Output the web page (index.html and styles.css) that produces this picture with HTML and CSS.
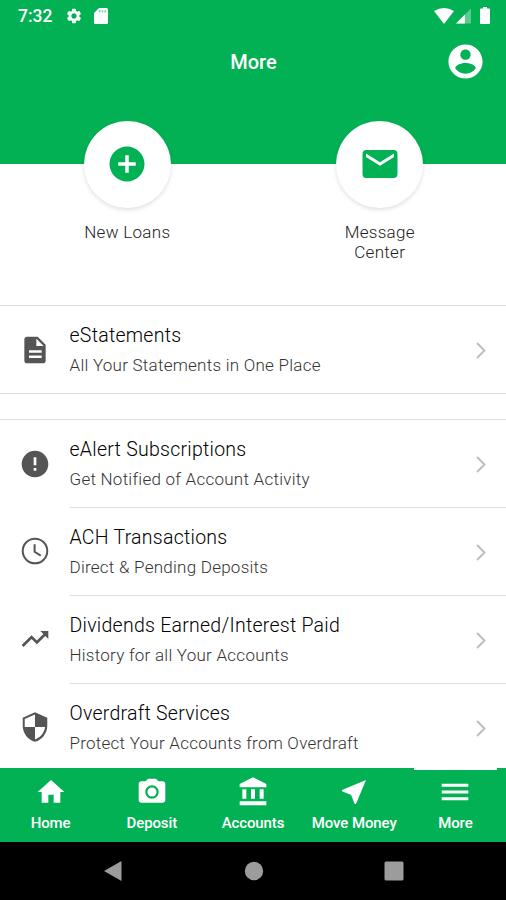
FILE: index.html
```html
<!DOCTYPE html>
<html lang="en">
<head>
    <meta charset="UTF-8">
    <meta name="viewport" content="width=device-width, initial-scale=1.0">
    <title>More</title>
    <link rel="stylesheet" href="styles.css">
</head>
<body>
    <div class="screen">
        <header class="header">
            <div class="status-bar">
                <span class="time">7:32</span>
                <svg class="status-gear" viewBox="0 0 24 24"><path d="M19.14 12.94c.04-.3.06-.61.06-.94 0-.32-.02-.64-.07-.94l2.03-1.58c.18-.14.23-.41.12-.61l-1.92-3.32c-.12-.22-.37-.29-.59-.22l-2.39.96c-.5-.38-1.03-.7-1.62-.94l-.36-2.54c-.04-.24-.24-.41-.48-.41h-3.84c-.24 0-.43.17-.47.41l-.36 2.54c-.59.24-1.13.57-1.62.94l-2.39-.96c-.22-.08-.47 0-.59.22L2.74 8.87c-.12.21-.08.47.12.61l2.03 1.58c-.05.3-.09.63-.09.94s.02.64.07.94l-2.03 1.58c-.18.14-.23.41-.12.61l1.92 3.32c.12.22.37.29.59.22l2.39-.96c.5.38 1.03.7 1.62.94l.36 2.54c.05.24.24.41.48.41h3.84c.24 0 .44-.17.47-.41l.36-2.54c.59-.24 1.13-.56 1.62-.94l2.39.96c.22.08.47 0 .59-.22l1.92-3.32c.12-.22.07-.47-.12-.61l-2.01-1.58zM12 15.6c-1.98 0-3.6-1.62-3.6-3.6s1.62-3.6 3.6-3.6 3.6 1.62 3.6 3.6-1.62 3.6-3.6 3.6z"/></svg>
                <svg class="status-card" viewBox="0 0 14 16"><path d="M5 0h7.500q1.500 0 1.500 1.500v13q0 1.500-1.500 1.500h-11Q0 16 0 14.500V5z"/><path class="card-slot" d="M5 2h1.500v2.500H5zM7.700 2h1.500v2.500H7.700zM10.400 2h1.500v2.500h-1.500z"/></svg>
                <div class="status-right">
                    <svg class="wifi" viewBox="0 0 20 16"><path d="M10 16L0 3Q10-3 20 3z"/></svg>
                    <svg class="signal" viewBox="0 0 16 16"><path class="signal-empty" d="M0 16L16 0v16z"/><path d="M0 16L9.500 6.500V16z"/></svg>
                    <svg class="battery" viewBox="0 0 10 17"><path d="M3 0h4v1.500h2q1 0 1 1V16q0 1-1 1H1q-1 0-1-1V2.500q0-1 1-1h2z"/></svg>
                </div>
            </div>
            <div class="title-bar">
                <h1>More</h1>
                <svg class="profile" viewBox="0 0 24 24"><path d="M12 2C6.480 2 2 6.480 2 12s4.480 10 10 10 10-4.480 10-10S17.520 2 12 2zm0 3c1.660 0 3 1.340 3 3s-1.340 3-3 3-3-1.340-3-3 1.340-3 3-3zm0 14.200c-2.500 0-4.710-1.280-6-3.220.030-1.990 4-3.080 6-3.080 1.990 0 5.970 1.090 6 3.080-1.290 1.940-3.500 3.220-6 3.220z"/></svg>
            </div>
        </header>

        <main class="content">
            <section class="shortcuts">
                <div class="shortcut">
                    <div class="circle">
                        <svg viewBox="0 0 24 24"><path d="M12 2C6.480 2 2 6.480 2 12s4.480 10 10 10 10-4.480 10-10S17.520 2 12 2zm5 11h-4v4h-2v-4H7v-2h4V7h2v4h4v2z"/></svg>
                    </div>
                    <span>New Loans</span>
                </div>
                <div class="shortcut">
                    <div class="circle">
                        <svg viewBox="0 0 24 24"><path d="M20 4H4c-1.100 0-1.990.9-1.990 2L2 18c0 1.100.9 2 2 2h16c1.100 0 2-.9 2-2V6c0-1.100-.9-2-2-2zm0 4l-8 5-8-5V6l8 5 8-5v2z"/></svg>
                    </div>
                    <span>Message<br>Center</span>
                </div>
            </section>

            <ul class="list">
                <li class="item">
                    <svg class="item-icon" viewBox="0 0 24 24"><path d="M14 2H6c-1.100 0-1.990.9-1.990 2L4 20c0 1.100.89 2 1.990 2H18c1.100 0 2-.9 2-2V8l-6-6zm3 16H7.500v-1.800H17zm0-4H7.500v-1.800H17zm-4-5V3.500L18.500 9H13z"/></svg>
                    <div class="item-body">
                        <div class="item-text">
                            <h2>eStatements</h2>
                            <p>All Your Statements in One Place</p>
                        </div>
                        <svg class="chevron" viewBox="0 0 10 17"><path d="M1 1l7.500 7.500L1 16"/></svg>
                    </div>
                </li>
            </ul>

            <ul class="list">
                <li class="item">
                    <svg class="item-icon" viewBox="0 0 24 24"><path d="M12 2C6.480 2 2 6.480 2 12s4.480 10 10 10 10-4.480 10-10S17.520 2 12 2zm1 15h-2v-2h2v2zm0-4h-2V7h2v6z"/></svg>
                    <div class="item-body">
                        <div class="item-text">
                            <h2>eAlert Subscriptions</h2>
                            <p>Get Notified of Account Activity</p>
                        </div>
                        <svg class="chevron" viewBox="0 0 10 17"><path d="M1 1l7.500 7.500L1 16"/></svg>
                    </div>
                </li>
                <li class="item">
                    <svg class="item-icon clock" viewBox="0 0 24 24"><circle cx="12" cy="12" r="9.200"/><path d="M11.700 7v5.600l4.600 2.800"/></svg>
                    <div class="item-body">
                        <div class="item-text">
                            <h2>ACH Transactions</h2>
                            <p>Direct &amp; Pending Deposits</p>
                        </div>
                        <svg class="chevron" viewBox="0 0 10 17"><path d="M1 1l7.500 7.500L1 16"/></svg>
                    </div>
                </li>
                <li class="item">
                    <svg class="item-icon" viewBox="0 0 24 24"><path d="M16 6l2.290 2.290-4.880 4.880-4-4L2 16.590 3.410 18l6-6 4 4 6.300-6.290L22 12V6z"/></svg>
                    <div class="item-body">
                        <div class="item-text">
                            <h2>Dividends Earned/Interest Paid</h2>
                            <p>History for all Your Accounts</p>
                        </div>
                        <svg class="chevron" viewBox="0 0 10 17"><path d="M1 1l7.500 7.500L1 16"/></svg>
                    </div>
                </li>
                <li class="item">
                    <svg class="item-icon" viewBox="0 0 24 24"><path fill-rule="evenodd" d="M12 1L2.800 5v6c0 5.550 3.900 10.740 9.200 12 5.300-1.260 9.200-6.450 9.200-12V5zM12 2.600V12H4.300V6zM12 12h7.600c-.6 4.300-3.600 8-7.600 9.300z"/></svg>
                    <div class="item-body">
                        <div class="item-text">
                            <h2>Overdraft Services</h2>
                            <p>Protect Your Accounts from Overdraft</p>
                        </div>
                        <svg class="chevron" viewBox="0 0 10 17"><path d="M1 1l7.500 7.500L1 16"/></svg>
                    </div>
                </li>
            </ul>
        </main>

        <nav class="tabs">
            <a class="tab">
                <svg viewBox="0 0 24 24"><path d="M10 20v-6h4v6h5v-8h3L12 3 2 12h3v8z"/></svg>
                <span>Home</span>
            </a>
            <a class="tab">
                <svg viewBox="0 0 24 24"><path d="M9 2L7.170 4H4c-1.100 0-2 .9-2 2v12c0 1.100.9 2 2 2h16c1.100 0 2-.9 2-2V6c0-1.100-.9-2-2-2h-3.170L15 2H9zm3 15c-2.760 0-5-2.240-5-5s2.240-5 5-5 5 2.240 5 5-2.240 5-5 5z"/><circle cx="12" cy="12" r="3.400"/></svg>
                <span>Deposit</span>
            </a>
            <a class="tab">
                <svg viewBox="0 0 24 24"><path d="M4 10v7h3v-7H4zm6.500 0v7h3v-7h-3zM2 22h20v-3H2v3zm15-12v7h3v-7h-3zM12 1L2 6v2.500h20V6L12 1z"/></svg>
                <span>Accounts</span>
            </a>
            <a class="tab">
                <svg viewBox="0 0 24 24"><path d="M21 3L3 10.530v.98l6.840 2.650L12.480 21h.98L21 3z"/></svg>
                <span>Move Money</span>
            </a>
            <a class="tab active">
                <svg viewBox="0 0 24 24"><path d="M2 5.800h20v2.200H2zM2 10.900h20v2.200H2zM2 16h20v2.200H2z"/></svg>
                <span>More</span>
            </a>
        </nav>

        <div class="system-nav">
            <svg viewBox="0 0 20 22"><path d="M18.500 1v20L1 11z"/></svg>
            <svg viewBox="0 0 20 22"><circle cx="10" cy="11" r="9.200"/></svg>
            <svg viewBox="0 0 20 22"><rect x=".5" y="1.500" width="19" height="19" rx="1.500"/></svg>
        </div>
    </div>
</body>
</html>
```
FILE: styles.css
```css
* {
    box-sizing: border-box;
}

body {
    margin: 0;
    font-family: Roboto, "Liberation Sans", sans-serif;
    background-color: #fff;
}

h1, h2, p, ul {
    margin: 0;
    padding: 0;
}

svg {
    display: block;
    flex: none;
    fill: currentColor;
}

.screen {
    display: flex;
    flex-direction: column;
    height: 900px;
    overflow: hidden;
}

.header {
    flex: none;
    height: 121px;
    background-color: #02b153;
    color: #fff;
}

.status-bar {
    display: flex;
    align-items: center;
    height: 31px;
    padding: 0 16px 0 18px;
}

.time {
    width: 47px;
    font-size: 17.5px;
    font-weight: 500;
    line-height: 32px;
}

.status-gear {
    width: 18px;
    height: 18px;
}

.status-card {
    width: 14px;
    height: 16px;
    margin-left: 11px;
}

.card-slot {
    fill: #02b153;
    opacity: 0.5;
}

.status-right {
    display: flex;
    align-items: center;
    margin-left: auto;
}

.wifi {
    width: 20px;
    height: 16px;
}

.signal {
    width: 15px;
    height: 16px;
    margin-left: 2px;
}

.signal-empty {
    opacity: 0.35;
}

.battery {
    width: 10px;
    height: 17px;
    margin-left: 9px;
}

.title-bar {
    display: grid;
    grid-template-columns: 1fr auto 1fr;
    align-items: center;
    height: 60px;
    padding: 0 20px;
}

.title-bar h1 {
    grid-column: 2;
    padding: 1px 0 0 1px;
    font-size: 20px;
    font-weight: 500;
}

.profile {
    width: 41px;
    height: 41px;
    justify-self: end;
}

.content {
    flex: 1;
    min-height: 0;
    overflow: hidden;
}

.shortcuts {
    display: flex;
    height: 184px;
    padding-left: 1px;
    background: linear-gradient(#02b153, #02b153) top / 100% 43px no-repeat;
}

.shortcut {
    display: flex;
    flex: 1;
    flex-direction: column;
    align-items: center;
    color: #222;
    font-size: 17px;
    font-weight: 300;
    line-height: 20px;
    letter-spacing: 0.3px;
    text-align: center;
}

.circle {
    display: flex;
    justify-content: center;
    align-items: center;
    width: 87px;
    height: 87px;
    margin-bottom: 14px;
    border-radius: 50%;
    background-color: #fff;
    color: #02b153;
    box-shadow: 0 2px 4px rgba(0, 0, 0, 0.12);
}

.circle svg {
    width: 42px;
    height: 42px;
    margin-bottom: 1px;
}

.list {
    margin-bottom: 25px;
    border-top: 1px solid #ddd;
    border-bottom: 1px solid #ddd;
    list-style: none;
}

.item {
    display: flex;
    align-items: center;
    height: 87px;
    padding-left: 19px;
}

.item-icon {
    width: 32px;
    height: 32px;
    margin-right: 18.5px;
    color: #555;
}

.clock {
    fill: none;
    stroke: currentColor;
    stroke-width: 1.5;
}

.item-body {
    display: flex;
    flex: 1;
    justify-content: space-between;
    align-items: center;
    height: 100%;
    padding-right: 20px;
}

.item + .item {
    height: 88px;
}

.item + .item .item-body {
    border-top: 1px solid #ddd;
}

.item-text h2 {
    margin-bottom: 7px;
    color: #000;
    font-size: 19.5px;
    font-weight: 300;
    line-height: 24px;
    letter-spacing: 0.26px;
}

.item-text p {
    color: #333;
    font-size: 17px;
    font-weight: 300;
    line-height: 20px;
    letter-spacing: 0.25px;
}

.chevron {
    width: 10px;
    height: 17px;
    margin-top: 1px;
    fill: none;
    stroke: #bbb;
    stroke-width: 1.8;
}

.tabs {
    display: flex;
    flex: none;
    height: 74px;
    background-color: #02b153;
    color: #fff;
}

.tab {
    display: flex;
    flex: 1 0 0;
    flex-direction: column;
    align-items: center;
    padding-top: 8px;
    font-size: 15px;
    font-weight: 500;
    line-height: 18px;
    letter-spacing: -0.1px;
    white-space: nowrap;
}

.tab svg {
    width: 32px;
    height: 32px;
    margin-bottom: 6px;
}

.tab.active {
    background: linear-gradient(#fff, #fff) center top / 83px 2px no-repeat;
}

.system-nav {
    display: flex;
    flex: none;
    justify-content: space-between;
    align-items: center;
    height: 58px;
    padding: 0 102px 0 103px;
    background-color: #000;
    color: #9c9c9c;
}

.system-nav svg {
    width: 20px;
    height: 22px;
}
```
